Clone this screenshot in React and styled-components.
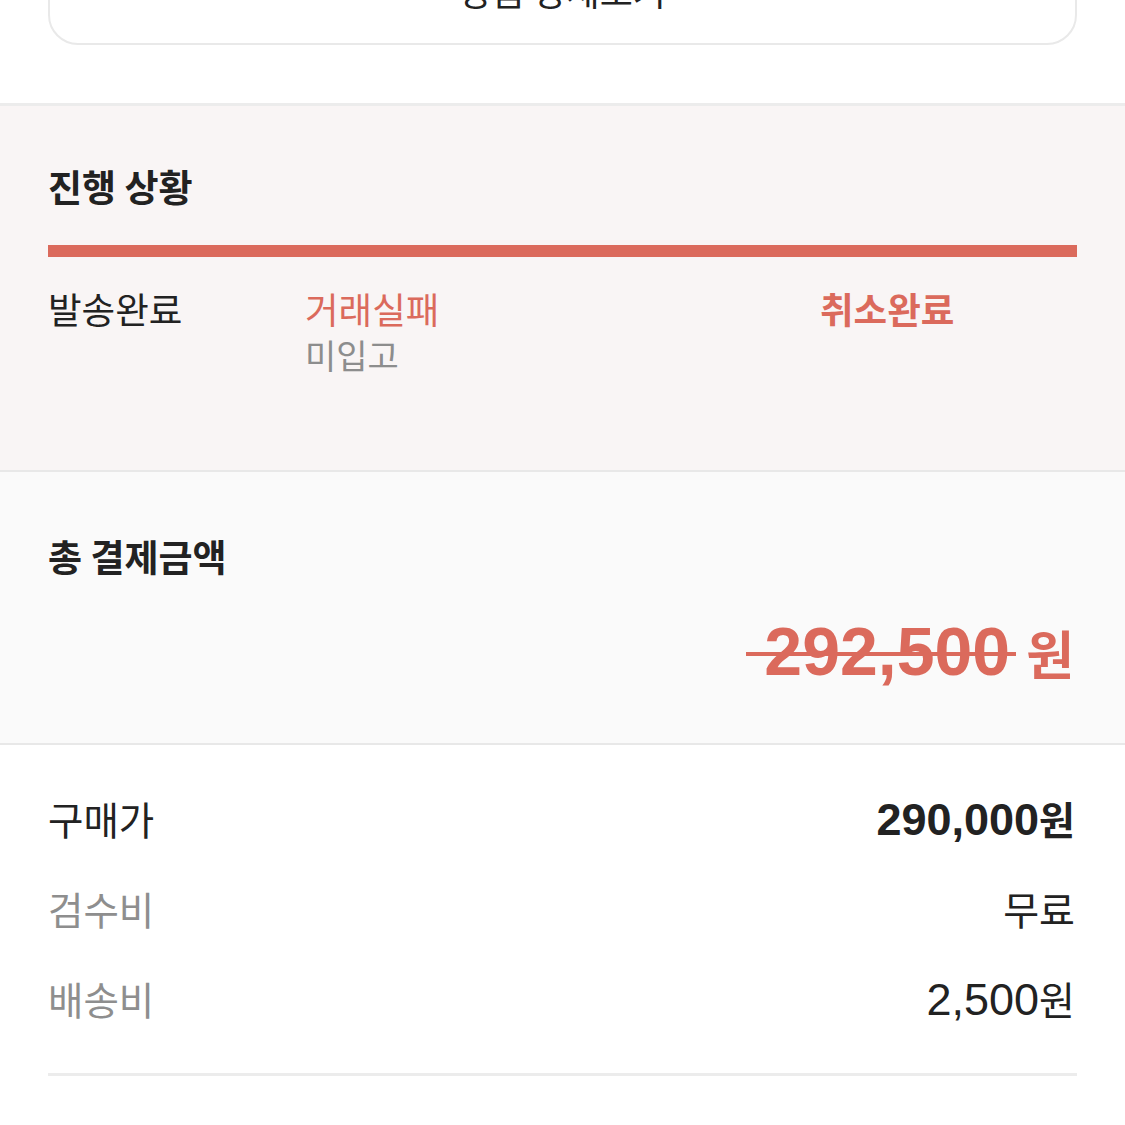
import React from "react";
import styled, { createGlobalStyle } from "styled-components";

const GlobalStyle = createGlobalStyle`
  body {
    margin: 0;
    background: #fff;
    font-family: "Noto Sans CJK KR", "Noto Sans", sans-serif;
    color: #222;
  }
`;

const RED = "#db6a5c";

const Page = styled.div`
  width: 1125px;
  margin-top: -56px;
  overflow: hidden;
`;

const TopArea = styled.div`
  padding: 0 48px 58px;
  border-bottom: 3px solid #ececec;
`;

const DetailButton = styled.button`
  width: 100%;
  height: 101px;
  display: flex;
  align-items: center;
  justify-content: center;
  background: #fff;
  border: 2px solid #e9e9e9;
  border-radius: 30px;
  font-family: "Noto Sans CJK KR", sans-serif;
  font-size: 36px;
  color: #222;
  padding: 0 0 10px;
`;

const Section = styled.section`
  background: ${(p) => p.$bg};
  padding: ${(p) => p.$pad};
  border-bottom: ${(p) => (p.$border ? "2px solid #e8e8e8" : "none")};
  box-sizing: border-box;
  height: ${(p) => p.$h};
`;

const Title = styled.h2`
  margin: 0;
  font-size: 37px;
  font-weight: 700;
  line-height: 44px;
  color: #222;
`;

const Bar = styled.div`
  height: 12px;
  background: ${RED};
  margin-top: 37px;
`;

const Steps = styled.div`
  display: grid;
  grid-template-columns: 257px 515px 1fr;
  margin-top: 28px;
`;

const Step = styled.div`
  display: flex;
  flex-direction: column;
`;

const StepLabel = styled.span`
  font-size: 36.5px;
  line-height: 48px;
  font-weight: ${(p) => (p.$bold ? 700 : 400)};
  color: ${(p) => (p.$red ? RED : "#222")};
`;

const StepSub = styled.span`
  font-size: 34px;
  line-height: 44px;
  color: #8d8d8d;
`;

const PriceRow = styled.div`
  display: flex;
  justify-content: flex-end;
  align-items: baseline;
  margin-top: 34px;
  padding-right: 3px;
  color: ${RED};
  font-weight: 700;
`;

const Struck = styled.span`
  position: relative;
  font-family: "Liberation Sans", Arial, sans-serif;
  font-size: 68px;
  font-weight: 700;
  padding: 0 6px 0 18px;
  &::after {
    content: "";
    position: absolute;
    left: 0;
    right: 0;
    top: 51%;
    height: 4px;
    background: ${RED};
  }
`;

const Won = styled.span`
  font-size: ${(p) => p.$size};
  margin-left: ${(p) => p.$gap || "0"};
  font-weight: inherit;
  font-family: "Noto Sans CJK KR", sans-serif;
`;

const Rows = styled.div`
  padding: 28px 48px 0;
`;

const Row = styled.div`
  display: flex;
  justify-content: space-between;
  align-items: center;
  height: 90px;
`;

const RowLabel = styled.span`
  font-size: 38.5px;
  color: ${(p) => (p.$muted ? "#8e8e8e" : "#222")};
`;

const RowValue = styled.span`
  font-family: "Liberation Sans", Arial, "Noto Sans CJK KR", sans-serif;
  font-size: 45px;
  font-weight: ${(p) => (p.$bold ? 700 : 400)};
  color: #222;
  padding-right: 2px;
`;

const BottomRule = styled.hr`
  margin: 30px 48px 0;
  border: none;
  border-top: 3px solid #ececec;
`;

const rows = [
  { label: "구매가", value: "290,000", won: true, bold: true },
  { label: "검수비", text: "무료", muted: true },
  { label: "배송비", value: "2,500", won: true, muted: true },
];

export default function App() {
  return (
    <Page>
      <GlobalStyle />
      <TopArea>
        <DetailButton>상품 상세보기</DetailButton>
      </TopArea>

      <Section $bg="#f9f5f5" $pad="58px 48px 0" $h="366px" $border>
        <Title>진행 상황</Title>
        <Bar />
        <Steps>
          <Step>
            <StepLabel>발송완료</StepLabel>
          </Step>
          <Step>
            <StepLabel $red>거래실패</StepLabel>
            <StepSub>미입고</StepSub>
          </Step>
          <Step>
            <StepLabel $red $bold>취소완료</StepLabel>
          </Step>
        </Steps>
      </Section>

      <Section $bg="#fafafa" $pad="62px 48px 0" $h="273px" $border>
        <Title>총 결제금액</Title>
        <PriceRow>
          <Struck>292,500</Struck>
          <Won $size="52px" $gap="10px">원</Won>
        </PriceRow>
      </Section>

      <Rows>
        {rows.map((r) => (
          <Row key={r.label}>
            <RowLabel $muted={r.muted}>{r.label}</RowLabel>
            <RowValue $bold={r.bold}>
              {r.value}
              {r.won && <Won $size="39px">원</Won>}
              {r.text && <Won $size="39px">{r.text}</Won>}
            </RowValue>
          </Row>
        ))}
      </Rows>
      <BottomRule />
    </Page>
  );
}
